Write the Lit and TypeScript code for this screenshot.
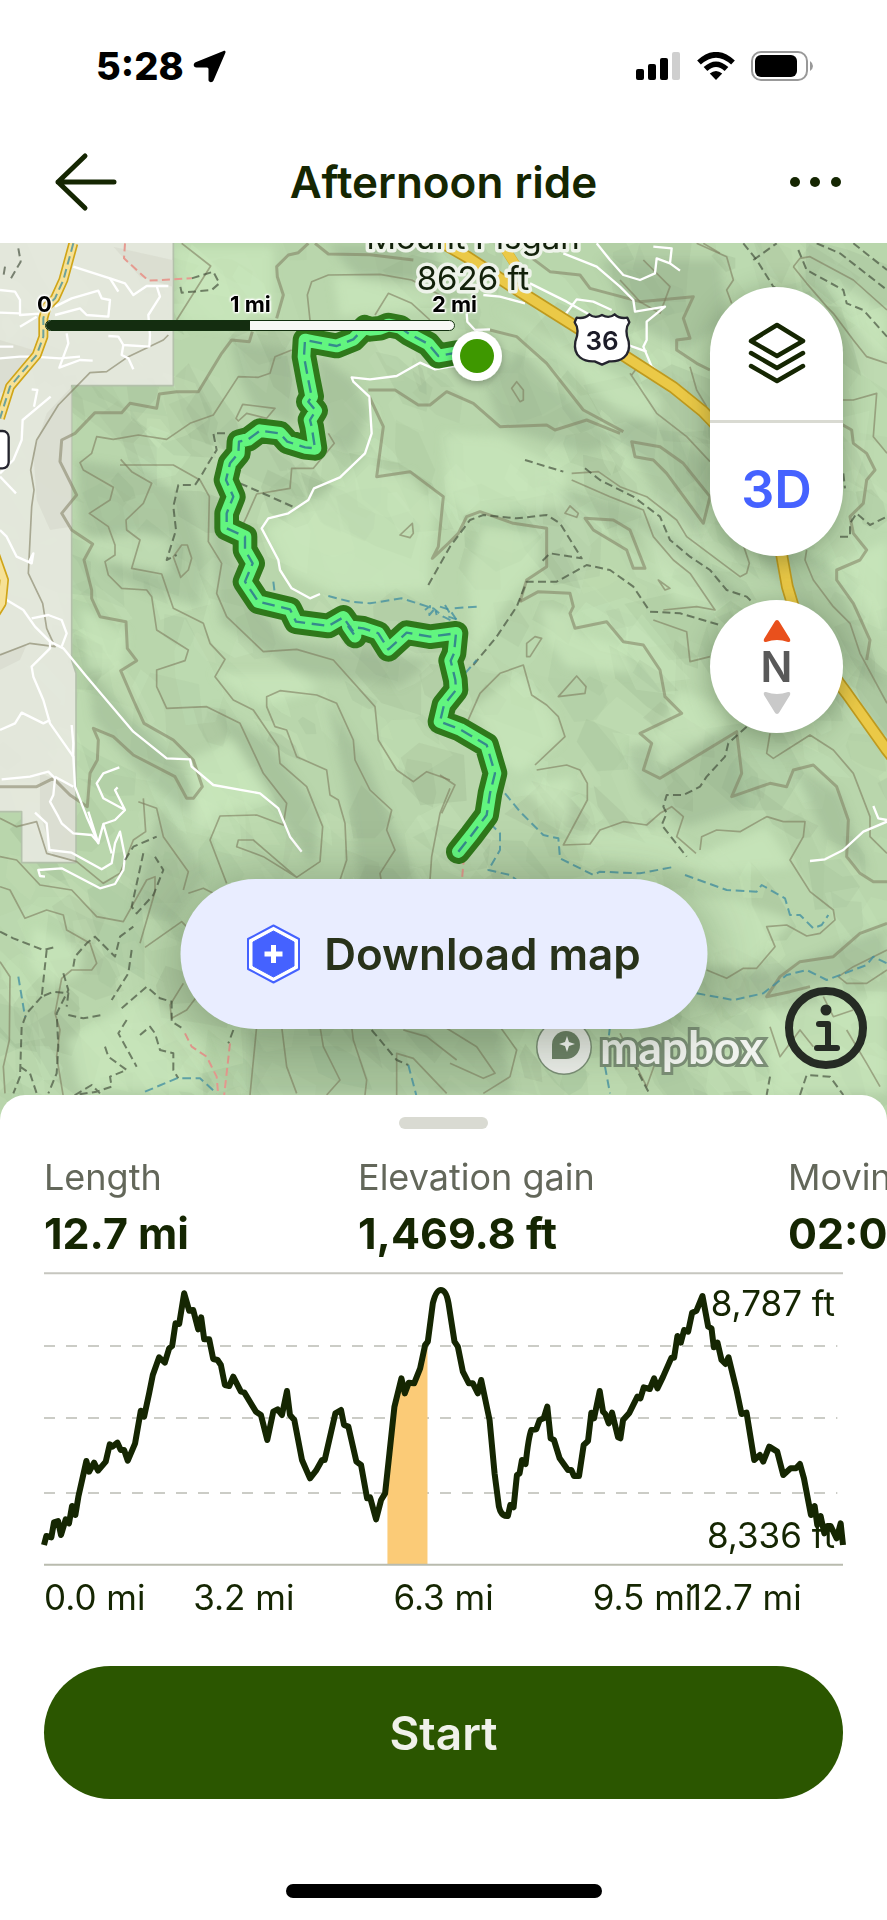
import { LitElement, html, css, svg } from "lit";
import { customElement } from "lit/decorators.js";

/* Map geometry is drawn on a 3x grid: one map pixel is three units. */
const THICK = [
  "M925,10L895,38 865,45 830,80 832,110 850,165 830,235",
  "M757,275L748,305 695,300 665,340 595,455 530,455 478,462 470,505 390,490 365,518 285,518 225,580 185,600 180,665 230,765 185,820 215,870 278,912 252,960 275,1050 275,1075 300,1130 378,1145 382,1225 410,1262 362,1292 400,1380 432,1450 520,1500 580,1560 607,1640 580,1675 560,1675 525,1610 400,1545 340,1490 280,1465 295,1500 292,1560 270,1600 262,1700 210,1665 160,1615 110,1640 0,1640",
  "M945,10L985,42 1110,44 1240,60",
  "M1105,450L1185,450 1255,495 1290,495 1340,455 1420,490 1500,560 1640,555 1665,570 1760,540 1860,580",
  "M1108,470L1150,560 1130,710 1230,695 1330,770 1315,920 1297,955 1345,910 1375,880 1400,830 1440,815 1540,850 1640,865 1640,980 1580,1020 1560,1085",
  "M1590,50L1650,95 1740,105 1770,145 1920,185 2080,170 2050,235 2070,295 2030,300 2030,330 2090,370 2130,390",
  "M1470,270L1550,290 1640,370 1750,510 1870,575",
  "M1895,605L1980,620 2050,670 2130,770 2110,850 2000,700 1960,660 1905,650z",
  "M1755,835L1840,840 1890,870 1935,985 1900,985 1880,930 1780,870z",
  "M1560,1085L1615,1055 1710,1060 1720,1100 1710,1120 1725,1165 1820,1145 1870,1205 1930,1215 1980,1290 1995,1370 2045,1420 1920,1480 1955,1510 1930,1590 1980,1615 2210,1475 2225,1600 2195,1670 2310,1630 2360,1640 2380,1590 2440,1575 2510,1640 2545,1740 2540,1850 2580,1900 2620,1925 2661,1925",
  "M2520,550L2555,570 2560,610 2600,640 2625,690 2600,720 2590,790 2550,830 2560,880 2600,930 2580,960 2510,990 2510,1020 2560,1090 2610,1200 2600,1260",
  "M2661,2050L2580,2080 2500,2150 2400,2165 2340,2210 2300,2270 2370,2255 2430,2240",
];
const THIN = [
  "M545,10L632,78 530,240",
  "M505,285L490,300 385,350 320,395 270,398 175,495 110,600 92,690 102,750 95,800 85,1000 128,1090 140,1165 165,1220 90,1210 0,1245",
  "M930,240L922,165 935,125 985,105 1140,103 1235,120 1330,170",
  "M1125,225L1165,160 1235,190 1290,240",
  "M875,330L825,350 810,400 775,412 715,410 640,525 570,550 500,598 415,585 340,598 290,590 275,640 240,668 250,690 340,742 330,780 268,820 325,860 345,915 345,945 315,965 325,1005 365,1045 440,1050 455,1070 470,1170 565,1230 555,1262 470,1290 470,1340 500,1405 620,1400 720,1450 790,1600 860,1690 850,1755 770,1725 660,1728 630,1800 680,1930",
  "M360,675L520,675 600,720 628,770 625,905 665,970 650,1060 680,1130 790,1235 890,1228 1000,1260 1125,1400 1135,1500 1190,1590 1240,1625 1280,1595 1350,1620",
  "M362,658L395,695 455,730 430,790 378,840 380,870 420,900 395,985 485,1002 520,1105 610,1150 630,1210 675,1258 645,1310 700,1380 760,1410 835,1520 840,1570 920,1640 968,1760 960,1865 890,1912 790,1850 710,1820 715,1800 760,1800 890,1912",
  "M800,1400L800,1370 840,1352 950,1365 1010,1390 1060,1500 1065,1560 1110,1650 1175,1710 1160,1770 1185,1830 1140,1900 1145,1930",
  "M800,1400L825,1460 860,1470 890,1550 980,1590 990,1665 1015,1680 1035,1750 1040,1860 1020,1920",
  "M728,493L825,505 800,535 740,520 715,543 708,535z",
  "M520,950L545,915 562,915 575,955 565,990 542,1012z",
  "M985,580L1003,610 940,685 875,685 870,745 770,762 740,830 728,855",
  "M1200,885L1237,850 1240,880 1230,893z",
  "M0,1735L50,1760 110,1745 140,1840 230,1865 310,1930 360,1900 400,1800 437,1775 430,1675",
  "M415,1685L470,1705 490,1790 565,1895 550,1950",
  "M0,1850L50,1860 120,1935 215,1950 290,2030 370,2045 440,1920 465,1910 465,1955 420,2110",
  "M0,1940L30,1950 75,2035 140,2010 190,2025 200,2070 270,2110 290,2170 275,2190 215,2190 185,2215 165,2320 180,2370 170,2450 190,2570",
  "M0,2165L30,2210 28,2400 10,2480 15,2560",
  "M435,2122L545,2045 560,2060",
  "M550,2230L510,2295 515,2335 560,2310 590,2270",
  "M565,1960L610,1945 640,1960",
  "M770,2360L750,2565M845,2360L860,2480 890,2560M960,2360L970,2420 1020,2520 980,2565M1055,2360L1060,2400 1100,2520 1095,2565M1190,2565L1190,2440 1240,2455 1340,2560M1210,2370L1280,2390 1370,2460",
  "M1340,2365L1430,2420 1485,2500 1450,2515 1350,2470M1500,2360L1550,2430 1530,2510 1450,2560",
  "M1350,1645L1320,1720 1295,1850 1290,1920",
  "M1320,1605L1365,1635 1325,1720",
  "M1860,120L1920,185 1980,220 2010,140 1930,60",
  "M2090,10L2180,50 2200,120 2180,150 2195,190",
  "M2110,10L2160,40M2380,80L2400,55 2430,50 2560,120 2661,210",
  "M2380,80L2420,130 2480,200 2500,220 2560,300 2600,350 2661,370",
  "M1535,445L1550,425 1570,450 1570,480 1560,485z",
  "M1890,400L1970,520 2060,590 2130,665",
  "M1910,385L1895,405M2070,380L2090,450 2120,500",
  "M1715,700L1795,695 1860,740 1940,770 2030,840 2060,890 2220,1010 2240,1000 2248,970 2225,900",
  "M1715,720L1830,770 1930,810 1960,890 2020,960 2070,1000 2145,1110 2090,1100 1990,1110",
  "M1695,820L1710,798 1735,820 1730,832z",
  "M1975,1020L2010,1045 1995,1050z",
  "M1580,1210L1605,1190 1625,1195 1590,1250 1580,1250z",
  "M1960,1140L2060,1175 2070,1265 2130,1250",
  "M1400,1450L1440,1360 1500,1300 1570,1275 1595,1365 1640,1395 1675,1430 1695,1490 1605,1575",
  "M1675,1370L1730,1308 1758,1340 1755,1360z",
  "M1610,1590L1700,1575 1740,1590 1762,1630 1762,1680 1690,1815 1770,1812 1800,1770 1870,1745 1940,1755 1980,1720 2015,1700 2050,1730 2030,1790 2088,1840",
  "M2100,1830L2105,1790 2150,1770 2220,1775 2300,1730 2350,1745 2415,1745 2410,1790 2370,1860 2430,1955 2500,2010 2505,2040 2460,2080 2420,2088 2360,2055 2300,2060 2325,2120 2270,2185 2230,2185 2180,2215 2120,2190",
  "M2310,1480L2300,1540 2320,1555 2430,1485 2500,1530 2560,1600 2610,1730 2610,1790 2661,1840",
  "M2420,930L2415,960 2440,1020 2500,1100 2550,1150 2580,1240 2661,1390",
  "M2520,480L2560,480 2630,460 2620,590 2661,640",
  "M2661,2130L2560,2180 2515,2210 2540,2230 2600,2230 2661,2190",
  "M2470,2270L2500,2330 2560,2310M2310,2360L2340,2450 2400,2370 2440,2420M2540,2370L2600,2470 2640,2540",
  "M1860,2380L1940,2540 1990,2400",
];
const DASH = [
  "M575,115L640,95 658,130 635,150 545,158 540,135",
  "M55,25L62,65 30,120M15,80L10,110",
  "M675,580L640,580 650,630 625,670 605,705 585,735 535,735 520,800 528,870 500,960 530,945",
  "M720,730L800,765 885,803",
  "M1285,1035L1350,920 1410,840 1450,825 1550,835 1640,825 1680,850 1745,955 1650,940 1620,970",
  "M1420,1275L1490,1190 1550,1100 1580,1025 1670,1025 1760,975 1830,990 1900,1040 1950,1115 2040,1120 2160,1155",
  "M1575,660L1690,695M1755,685L1800,720 1900,770 1980,830 2010,900 2070,950 2130,990 2180,1050 2240,1070 2260,1090",
  "M2230,10L2270,60 2320,140 2390,180",
  "M2260,60L2330,10M2395,30L2420,90 2530,150 2540,190 2590,210 2661,290",
  "M2450,10L2520,40 2661,150M2560,10L2661,90",
  "M2240,1460L2185,1510 2175,1550 2120,1610 2100,1640 2050,1665 2000,1665 1990,1700 2000,1720 1985,1755 2060,1850",
  "M2520,890L2550,890 2550,850 2570,820 2610,855 2661,830",
  "M2530,700L2535,745",
  "M0,2075L40,2095 130,2130 170,2120M140,2130L125,2270 160,2255 205,2260 200,2300",
  "M125,2270L80,2320 65,2360 60,2510 40,2560M60,2480L90,2500 110,2560",
  "M190,2200L205,2250 170,2320 175,2420 170,2500 145,2560",
  "M220,2180L225,2150 260,2110 285,2090 345,2150 360,2090 400,2060",
  "M205,2325L250,2335 305,2325M430,1840L395,2000 410,2020 460,1965 490,1890 465,1850",
  "M375,1860L400,1820 470,1790M395,2130L385,2200 335,2280",
  "M365,2305L405,2270 440,2240 480,2275 515,2285 515,2345 555,2370",
  "M380,2340L355,2380 410,2480M420,2385L450,2360 465,2380 480,2430 520,2440 520,2490 535,2515",
  "M315,2420L325,2450 380,2490 330,2510 335,2540 290,2555 225,2565 275,2535 300,2560",
  "M700,2370L685,2410M1115,2370L1190,2460 1225,2475",
  "M1870,2400L1900,2470 1945,2555M2400,2565L2420,2505 2490,2510 2530,2565",
  "M2310,2510L2300,2565",
];
const BLUE = [
  "M985,1068L1050,1085 1110,1090 1205,1075 1300,1105 1330,1130 1370,1150",
  "M820,1025L825,1065 880,1110M1320,1100L1350,1110 1370,1140",
  "M1275,1110L1290,1098 1288,1125 1305,1105 1310,1125M1335,1095L1350,1120M1430,1100L1360,1105M1345,1130L1375,1140 1365,1155",
  "M1515,1660L1560,1715 1630,1785 1675,1795 1680,1855 1780,1905 1800,1895 1920,1900 2025,1880",
  "M1395,1300L1430,1260M1470,1750L1500,1780 1500,1830 1465,1890 1530,1905 1550,1920",
  "M2055,1905L2180,1950 2270,1955 2285,1935 2355,1975 2370,2025 2400,2025 2440,2065 2465,2055 2485,2025",
  "M2090,2260L2200,2280 2290,2260 2360,2205 2420,2190 2480,2220 2600,2175 2620,2150 2661,2170",
  "M55,2210L75,2330M435,2555L530,2515 600,2515 650,2560",
  "M1225,2475L1250,2570M1830,2360L1815,2480 1830,2560",
];
const PINK = [
  "M375,10L372,55 445,122 575,115",
  "M555,2380L575,2420 620,2450 650,2510 655,2570M690,2410L672,2570M1392,1850L1385,1930",
];
const WHITE = [
  "M220,80L330,115 375,130 400,165 440,138 505,138M470,138L480,170 445,225 450,285 448,320 370,315 355,290 325,288",
  "M330,115L355,155M165,200L215,175 295,152 305,175 330,180 325,230 260,225 240,205 165,225",
  "M0,150L45,155 60,180 60,225 130,220M0,218L60,220M60,260L110,230M0,320L40,320M0,355L60,350 100,350 180,355 240,350",
  "M200,280L205,310 178,383 240,360 278,362M370,315L365,345 385,355 400,388",
  "M95,448L112,450 102,500M152,470L68,540 65,600 40,660 0,700M0,710L48,760",
  "M0,870L20,890 50,950 95,970 100,940 85,970M0,1050L20,1080 70,1110 105,1160 150,1205 190,1225 260,1310 400,1475 500,1555 570,1558 575,1580 640,1635 780,1660 835,1705 870,1790 905,1835",
  "M95,1135L145,1125 185,1140 200,1180 185,1220M150,1200L150,1225 95,1280 100,1310 130,1380 150,1450 220,1550 225,1640 260,1730 295,1810 265,1715",
  "M0,1470L45,1450 65,1418 130,1450 150,1440M215,1455L220,1510 218,1550M5,1618L90,1610 145,1595 165,1615 160,1665 150,1685 175,1730 185,1750 220,1780 275,1785 295,1808 310,1752 335,1840",
  "M165,1610L220,1640M105,1718L140,1750 148,1830 215,1838 305,1888 335,1870 345,1810 360,1775 375,1850 370,1890 345,1932 300,1945 185,1885 115,1890 120,1908 135,1910",
  "M358,1582L310,1600 290,1630 310,1675 375,1710 345,1740 310,1752M375,1710L345,1650 353,1642",
  "M1350,380L1305,388 1260,368 1190,408 1110,418 1055,412 1060,425 1108,470 1115,580 1095,640 1020,712 942,745 925,780 865,820 805,835 785,865 835,960 840,990 875,1045 930,1075 960,1062",
  "M1400,220L1402,245 1425,270 1470,268M1350,380L1400,375",
  "M1690,40L1790,80 1860,140 1900,180 1905,215 1995,200 1940,245 1940,300 1930,320 1955,380 2045,452",
  "M1790,10L1830,60 1870,105 1920,120 1965,100 1970,55 2010,70 2040,92M2010,70L2015,25 1960,20",
  "M1590,130L1700,185 1780,230 1870,310 1940,335M1695,225L1730,178 1780,185 1835,210M1450,165L1500,170 1575,190",
  "M2430,1863L2475,1858 2530,1830 2590,1775 2661,1745M2620,1698L2635,1735 2661,1740",
];
const GOLD = "M1330,10L1400,50 1560,155 1740,268 1880,352 2020,442 2110,515 2230,640 2320,800 2345,945 2362,1040 2395,1150 2480,1280 2540,1360 2661,1530 2700,1580";
const PALE = "M220,10L190,120 165,175 140,200 130,235 130,290 110,345 30,440 0,535";
const ROUTE = "M1432,347L1370,338 1315,348 1285,312 1225,280 1200,262 1165,255 1140,265 1110,268 1095,262 1060,298 1010,318 940,305 915,300 912,350 925,420 935,470 925,485 947,512 930,540 935,560 945,625 915,622 862,605 840,580 780,572 745,598 717,605 715,640 690,670 678,720 700,770 680,820 680,865 735,890 735,930 758,970 735,1025 775,1085 870,1108 888,1145 985,1158 1030,1132 1060,1175 1065,1188 1045,1160 1090,1165 1135,1180 1165,1228 1220,1178 1290,1190 1368,1180 1362,1240 1352,1262 1366,1320 1368,1350 1332,1395 1320,1445 1380,1468 1460,1515 1485,1600 1470,1660 1460,1725 1415,1785 1375,1835";

const SHADE = [
  "M690,300L880,330 890,560 760,500 720,420z",
  "M950,340L1060,420 1110,520 1050,640 990,600 960,500z",
  "M230,660L430,690 560,780 620,960 600,1100 450,1060 330,1000 240,850z",
  "M620,730L680,900 740,1060 860,1200 1300,1260 1200,1340 900,1300 660,1150z",
  "M1560,330L1740,520 1860,600 1760,640 1500,560 1460,440z",
  "M1840,560L1960,520 2140,680 2100,900 1980,780z",
  "M1600,720L1900,800 2150,1000 2240,1080 2120,1100 1900,900z",
  "M2240,900L2480,960 2661,1350 2580,1300 2420,1130z",
  "M260,1280L420,1460 600,1640 560,1720 420,1600 280,1440z",
  "M640,1400L800,1500 960,1720 940,1880 820,1700 700,1520z",
  "M980,1380L1100,1560 1180,1760 1260,1930 1080,1930 1040,1650z",
  "M480,1700L620,1900 520,2050 400,2000z",
  "M1880,1520L2200,1470 2240,1700 2060,1760 1920,1660z",
  "M2380,1580L2520,1660 2610,1900 2480,1800z",
  "M2060,2160L2300,2200 2661,2060 2661,2180 2350,2260 2120,2320z",
  "M750,2360L1500,2360 1540,2565 750,2565z",
  "M980,10L1300,10 1350,200 1080,120z",
  "M1800,60L2160,60 2180,250 2050,330 1900,250z",
];
const GLOW = [
  "M1120,500L1140,700 1230,700 1310,800 1290,960 1290,1050 1000,1060 870,1000 800,870 930,790 1030,710 1120,620z",
  "M1330,580L1500,590 1700,690 1690,800 1500,820 1400,830 1340,760z",
  "M1450,860L1620,880 1620,970 1540,1060 1420,1240 1400,1000z",
  "M1620,1100L1720,1120 1730,1180 1860,1220 1900,1300 1700,1280 1640,1200z",
  "M1420,1400L1560,1300 1660,1420 1680,1500 1560,1600 1500,1560z",
  "M1560,1640L1720,1610 1700,1780 1990,1760 2100,1840 2300,1760 2380,1880 2160,1900 1800,1860z",
  "M1900,1960L2200,1980 2380,2040 2260,2170 2140,2180z",
  "M100,2060L250,2130 240,2200 160,2240 90,2180z",
  "M200,2400L440,2260 620,2400 600,2550 240,2550z",
  "M560,1560L700,1500 820,1680 640,1720 600,1780z",
  "M640,1300L900,1300 960,1350 780,1400z",
  "M240,900L420,880 520,900 500,1000 300,960z",
  "M240,1100L380,1180 360,1300 260,1290z",
  "M520,20L820,20 820,240 700,270 540,250z",
  "M1000,110L1300,130 1330,200 1020,230z",
  "M1480,200L1620,300 1840,500 1980,560 1980,470 1800,380z",
  "M1900,850L2100,1000 2160,1120 2020,1080z",
  "M2540,960L2661,900 2661,1200 2600,1100z",
  "M2040,1350L2180,1400 2180,1460 1980,1580 1960,1500z",
  "M2280,2320L2661,2250 2661,2560 2320,2560z",
  "M2460,100L2661,220 2661,360 2560,260z",
];

/* Angular hill-shading facets, generated from a fixed seed. */
function facets(count: number, seed: number) {
  let s = seed;
  const rnd = () => ((s = (s * 16807) % 2147483647) / 2147483647);
  const out: { d: string; light: boolean; o: number }[] = [];
  for (let i = 0; i < count; i++) {
    const x = rnd() * 2700, y = rnd() * 2620, r = 50 + rnd() * 130, n = 5 + Math.floor(rnd() * 3);
    const lean = 0.5 + rnd() * 0.8, flat = 0.3 + rnd() * 0.5;
    let d = "";
    for (let k = 0; k < n; k++) {
      const a = (k / n) * 6.28, q = r * (0.5 + rnd() * 0.7);
      const u = Math.cos(a) * q, v = Math.sin(a) * q * flat;
      d += `${k ? "L" : "M"}${Math.round(x + u * Math.cos(lean) - v * Math.sin(lean))},${Math.round(y + u * Math.sin(lean) + v * Math.cos(lean))}`;
    }
    out.push({ d: d + "z", light: rnd() > 0.45, o: 0.08 + rnd() * 0.2 });
  }
  return out;
}
const FACETS = facets(560, 4242);
const lines = (list: string[], cls: string) => list.map((d) => svg`<path class=${cls} d=${d} />`);

@customElement("trail-map")
export class TrailMap extends LitElement {
  static styles = css`
    :host { display: block; position: absolute; inset: 0; }
    svg { display: block; width: 100%; height: 100%; }
    path { fill: none; stroke-linejoin: round; }
    .light { fill: #cdebc0; }
    .dark { fill: #98b28d; }
    .shade { fill: #869f7c; opacity: 0.32; }
    .glow { fill: #cdebc0; opacity: 0.6; }
    .town { fill: #e7e9df; opacity: 0.93; stroke: #b4c0ac; stroke-width: 5; }
    .suburb { fill: #d6d7cb; opacity: 0.55; }
    .thick { stroke: #7c785c; stroke-opacity: 0.52; stroke-width: 9; }
    .thin { stroke: #7c785c; stroke-opacity: 0.58; stroke-width: 5; }
    .dash { stroke: #3f4a38; stroke-opacity: 0.66; stroke-width: 6; stroke-dasharray: 24 13; }
    .blue { stroke: #3e8ca0; stroke-opacity: 0.75; stroke-width: 6; stroke-dasharray: 26 14; }
    .pink { stroke: #e69a90; stroke-width: 6; stroke-dasharray: 24 13; }
    .white { stroke: #fff; stroke-width: 7; }
    .gold-edge { stroke: #bf9a1e; stroke-width: 38; }
    .gold { stroke: #ebc947; stroke-width: 28; }
    .pale-edge { stroke: #d0a518; stroke-width: 30; }
    .pale { stroke: #f6e196; stroke-width: 20; }
    .route-edge { stroke: #2f781b; stroke-width: 74; stroke-linecap: round; }
    .route { stroke: #62f57f; stroke-width: 38; stroke-linecap: round; }
    .route-dash { stroke: #358b8c; stroke-width: 7; stroke-dasharray: 38 20; }
    .plate { fill: #fff; stroke: #24242e; stroke-width: 7; }
    text { font-family: Inter, "Liberation Sans", sans-serif; fill: #12210a; }
    .peak { font-size: 33px; text-anchor: middle; stroke: #eef3ea; stroke-width: 7; stroke-linejoin: round; paint-order: stroke; }
    .road { font-size: 26px; font-weight: 600; text-anchor: middle; fill: #1c1c28; }
  `;
  render() {
    return html`<svg viewBox="0 243 887 877" preserveAspectRatio="xMinYMin slice" role="img" aria-label="Trail map">
      <defs>
        <filter id="soft" x="-20%" y="-20%" width="140%" height="140%"><feGaussianBlur stdDeviation="14" /></filter>
        <filter id="drop" x="-50%" y="-50%" width="200%" height="200%"><feDropShadow dx="0" dy="3" stdDeviation="4" flood-opacity=".3" /></filter>
      </defs>
      <rect x="0" y="243" width="887" height="900" fill="#b9d6ac" />
      <g transform="translate(0 240) scale(.333333)">
        ${FACETS.map((f) => svg`<path class=${f.light ? "light" : "dark"} d=${f.d} opacity=${f.o} />`)}
        <g filter="url(#soft)">${lines(SHADE, "shade")}${lines(GLOW, "glow")}</g>
        <path class="town" d="M-10,-10H520V437H215V1260L228,1300V1868H65V1715H-10z" />
        <path class="suburb" d="M215,440L140,520 100,640 110,780 150,870 215,860zM0,300L100,330 60,420 0,460zM120,1600L225,1640V1860L160,1850 120,1720zM340,20L518,60 518,140 420,110zM0,1240L80,1215 60,1260 0,1290z" />
        ${lines(THIN, "thin")}${lines(THICK, "thick")}
        ${lines(WHITE, "white")}
        <path class="pale-edge" d=${PALE} /><path class="pale" d=${PALE} /><path class="blue" d=${PALE} />
        <path class="pale-edge" d="M-20,930L12,1020 5,1090 -20,1130" /><path class="pale" d="M-20,930L12,1020 5,1090 -20,1130" />
        <path class="pale-edge" d="M1505,10L1550,80" /><path class="gold" d="M1505,10L1550,80" />
        <path class="gold-edge" d=${GOLD} /><path class="gold" d=${GOLD} />
        ${lines(DASH, "dash")}${lines(BLUE, "blue")}${lines(PINK, "pink")}
        <path class="route-edge" d=${ROUTE} /><path class="route" d=${ROUTE} /><path class="route-dash" d=${ROUTE} />
        <rect class="plate" x="-60" y="573" width="86" height="112" rx="18" />
        <path class="plate" d="M1730,233Q1755,237 1768,223Q1785,237 1806,225Q1827,237 1844,223Q1858,237 1882,233L1888,247Q1872,268 1886,305C1894,350 1860,366 1828,364L1806,374 1784,364C1752,366 1718,350 1726,305Q1740,268 1724,247z" />
      </g>
      <text class="peak" x="473" y="249">Mount Pisgah</text>
      <text class="peak" x="473" y="290">8626 ft</text>
      <text class="road" x="602" y="350">36</text>
      <circle cx="477" cy="356" r="25" fill="#fff" filter="url(#drop)" />
      <circle cx="477" cy="356" r="17" fill="#3e9800" />
    </svg>`;
  }
}

@customElement("elevation-chart")
export class ElevationChart extends LitElement {
  static styles = css`
    :host { display: block; }
    .plot { position: relative; height: 292px; }
    svg { display: block; width: 100%; height: 100%; overflow: visible; }
    path { fill: none; vector-effect: non-scaling-stroke; }
    .frame { stroke: #c6c6bf; stroke-width: 2px; }
    .base { stroke: #b9bbae; stroke-width: 2px; }
    .grid { stroke: #cbccc6; stroke-width: 2px; stroke-dasharray: 11px 11px; }
    .line { stroke: #152602; stroke-width: 6px; stroke-linejoin: round; }
    .steep { fill: #fbcb77; }
    .y { position: absolute; right: 8px; line-height: 44px; }
    .max { top: 8px; }
    .min { bottom: 8px; }
    .x { display: grid; grid-template-columns: 149fr 200fr 199fr 95fr 155fr; line-height: 44px; margin-top: 10px; }
    .x span { min-width: 0; white-space: nowrap; }
  `;
  render() {
    return html`<div class="plot">
        <svg viewBox="135 39 2394 876" preserveAspectRatio="none" role="img" aria-label="Elevation profile">
          <path class="frame" d="M135,40H2529" />
          <path class="grid" d="M135,258H2512M135,474H2512M135,699H2512" />
          <path class="steep" d="M1164,915V680L1170,580 1185,440 1206,370 1216,400 1228,368 1244,370 1262,325 1277,255 1284,248V915z" />
          <path class="base" d="M135,914H2529" />
          <path class="line" d="M135,855L142,828 157,832 165,787 177,783 186,825 200,778 210,790 219,738 229,765 238,710 262,603 270,635 285,608 297,632 320,605 332,553 340,560 355,548 365,570 375,570 386,602 408,550 425,452 435,470 450,400 461,345 480,292 497,308 510,265 519,258 529,190 540,192 555,100 570,152 582,150 597,208 606,172 615,238 630,238 642,297 655,300 665,315 677,375 690,378 702,350 725,395 735,397 770,455 785,465 804,540 822,455 835,448 848,465 863,393 872,465 885,480 908,600 932,655 950,632 968,600 976,600 1008,460 1025,450 1034,495 1047,500 1071,605 1085,615 1103,715 1112,712 1130,778 1145,720 1157,700 1170,580 1185,440 1206,355 1216,400 1228,368 1244,370 1262,325 1277,255 1285,245 1300,130Q1310,90 1324,90Q1340,90 1347,130L1365,245 1375,260 1390,335 1408,370 1420,370 1435,400 1445,360 1470,480 1485,640 1498,740Q1505,770 1525,768L1532,735 1542,742 1552,645 1560,640 1567,600 1578,612Q1587,530 1595,510L1610,508 1620,480 1632,475 1643,440 1653,535 1663,540 1680,595 1705,630 1715,630 1723,648 1738,648 1752,555 1765,543 1775,458 1783,475 1800,393 1810,455 1817,462 1827,490 1837,458 1855,532 1862,535 1870,480 1888,460 1913,410 1922,415 1932,382 1950,387 1963,355 1973,385 1990,350 2015,293 2023,293 2033,228 2043,248 2053,210 2065,215 2077,158 2090,152 2108,108 2125,200 2135,205 2142,262 2153,248 2165,300 2177,312 2186,292 2210,390 2225,462 2240,458 2263,600 2280,585 2290,605 2308,560 2332,575 2350,645 2372,625 2388,625 2400,612 2412,655 2433,765 2444,738 2452,795 2462,768 2473,820 2482,798 2492,798 2510,835 2522,790 2529,855" />
        </svg>
        <span class="y max">8,787 ft</span>
        <span class="y min">8,336 ft</span>
      </div>
      <div class="x"><span>0.0 mi</span><span>3.2 mi</span><span>6.3 mi</span><span>9.5 mi</span><span>12.7 mi</span></div>`;
  }
}

@customElement("app-root")
export class AppRoot extends LitElement {
  static styles = css`
    :host { display: flex; flex-direction: column; min-height: 100vh; overflow: hidden; background: #fff; color: #152602; font-family: Inter, "Liberation Sans", sans-serif; }
    * { box-sizing: border-box; }
    svg { display: block; }
    button { font: inherit; color: inherit; border: 0; padding: 0; margin: 0; background: none; display: flex; align-items: center; justify-content: center; }
    .status { display: flex; justify-content: space-between; align-items: center; height: 132px; padding: 0 72px 0 96px; color: #000; }
    .clock { display: flex; align-items: center; gap: 9px; font-size: 38px; font-weight: 800; line-height: 44px; }
    .signals { display: flex; align-items: center; gap: 16px; }
    .bar { display: grid; grid-template-columns: 80px 1fr 80px; align-items: center; height: 111px; padding: 0 44px 12px; }
    .bar button { height: 80px; justify-content: flex-end; }
    h1 { margin: 0; text-align: center; font-size: 44px; font-weight: 600; line-height: 56px; }
    .map { position: relative; flex: 1 1 auto; min-height: 600px; }
    .scale { position: absolute; top: 49px; left: 37px; width: 440px; font-size: 22px; font-weight: 700; line-height: 24px; color: #000; }
    .marks { display: flex; justify-content: space-between; text-shadow: 0 0 3px #fff, 0 0 3px #fff, 0 0 3px #fff, 0 0 3px #fff, 1px 1px 1px #fff, -1px -1px 1px #fff; }
    .zero { min-width: 32px; }
    .track { display: flex; height: 11px; width: 410px; margin: 4px 8px 0; border: 1px solid #12300f; border-radius: 6px; background: #f7f8f5; overflow: hidden; }
    .half { width: 50%; background: #142d10; }
    .tools { position: absolute; top: 44px; right: 44px; width: 133px; display: flex; flex-direction: column; gap: 44px; }
    .pill { display: flex; flex-direction: column; border-radius: 67px; background: #fff; box-shadow: 0 6px 28px rgba(30, 50, 20, 0.35); overflow: hidden; }
    .pill button { height: 133px; }
    .pill button + button { height: 136px; border-top: 3px solid #d9dad2; font-size: 52px; font-weight: 600; color: #4562ff; }
    .compass { height: 133px; flex-direction: column; gap: 8px; border-radius: 50%; background: #fff; box-shadow: 0 6px 28px rgba(30, 50, 20, 0.35); font-size: 42px; font-weight: 600; line-height: 32px; color: #595959; }
    .download { position: absolute; bottom: 91px; left: 50%; transform: translateX(-50%); width: 527px; height: 150px; border-radius: 75px; background: #e9edff; color: #28321a; gap: 24px; font-size: 44px; font-weight: 600; box-shadow: 0 8px 60px rgba(40, 60, 30, 0.4); }
    .brand { position: absolute; left: 535px; bottom: 44px; display: flex; align-items: center; gap: 7px; color: #f1f3ef; font: 700 46px/54px Lato, Inter, sans-serif; -webkit-text-stroke: 6px #7b8e76; paint-order: stroke fill; }
    .info { position: absolute; right: 20px; bottom: 51px; }
    .sheet { position: relative; margin-top: -25px; padding: 22px 0 22px; border-radius: 25px 25px 0 0; background: #fff; display: flex; flex-direction: column; font-size: 35px; }
    .grip { align-self: center; width: 89px; height: 12px; border-radius: 6px; background: #d9dad2; }
    .stats { display: grid; grid-template-columns: 314px 430px max-content; margin: 24px 0 0; padding: 0 0 12px 44px; overflow: hidden; }
    dt { color: #63675a; font-size: 36px; line-height: 48px; }
    dd { margin: 4px 0 0; font-size: 43px; font-weight: 700; line-height: 56px; }
    elevation-chart { margin: 0 44px; }
    .start { margin: 47px 44px 0; height: 133px; border-radius: 67px; background: #2b5600; color: #f0f1ea; font-size: 46px; font-weight: 600; }
    .home { align-self: center; width: 316px; height: 14px; margin-top: 85px; border-radius: 7px; background: #000; }
  `;
  render() {
    return html`
      <div class="status">
        <div class="clock">5:28
          <svg width="33" height="33" viewBox="0 0 33 33"><path d="M30.5 1C32 .4 33 1.500 32.300 3L20.500 30.500C19.500 33 15.500 32.500 15.500 30V19Q15.500 17.500 14 17.500H3.500C.2 17.500 -.2 13.500 2.600 12.300z" /></svg>
        </div>
        <div class="signals">
          <svg width="45" height="28" viewBox="0 0 45 28"><rect y="17" width="8" height="11" rx="2" /><rect x="12" y="12" width="8" height="16" rx="2" /><rect x="24" y="6" width="8" height="22" rx="2" /><rect x="36" width="8" height="28" rx="2" fill="#cfcfcf" /></svg>
          <svg width="38" height="28" viewBox="0 0 38 28"><g fill="none" stroke="#000" stroke-width="5.500"><path d="M2 10.500Q19-5 36 10.500" /><path d="M8.500 17Q19 7.500 29.500 17" /></g><path d="M19 28L12.800 21.500Q19 16.500 25.200 21.500z" /></svg>
          <svg width="64" height="30" viewBox="0 0 64 30"><rect x="1" y="1" width="55" height="28" rx="9" fill="none" stroke="#999" stroke-width="2" /><rect x="4" y="4" width="42" height="22" rx="6" /><path d="M59 10Q62 12 62 15T59 20z" fill="#999" /></svg>
        </div>
      </div>
      <header class="bar">
        <button aria-label="Back"><svg width="70" height="60" viewBox="0 0 70 60" fill="none" stroke="#152602" stroke-width="5" stroke-linecap="round" stroke-linejoin="round"><path d="M60 30H4M31 4L4 30L31 56" /></svg></button>
        <h1>Afternoon ride</h1>
        <button aria-label="More"><svg width="56" height="12" viewBox="0 0 56 12" fill="#152602"><circle cx="8" cy="6" r="5" /><circle cx="28" cy="6" r="5" /><circle cx="49" cy="6" r="5" /></svg></button>
      </header>
      <section class="map">
        <trail-map></trail-map>
        <div class="scale">
          <div class="marks"><span class="zero">0</span><span>1 mi</span><span>2 mi</span></div>
          <div class="track"><div class="half"></div></div>
        </div>
        <div class="tools">
          <div class="pill">
            <button aria-label="Map layers"><svg width="60" height="64" viewBox="0 0 60 64" fill="none" stroke="#152602" stroke-width="4.500" stroke-linecap="round" stroke-linejoin="round"><path d="M30 3L56 19L30 34L4 19zM4 31L30 46L56 31M4 44L30 59L56 44" /></svg></button>
            <button>3D</button>
          </div>
          <button class="compass" aria-label="North">
            <svg width="28" height="24" viewBox="0 0 28 24"><path d="M14 1Q15.500 1 16.500 3L27 20Q28 23.500 25 23Q14 19 3 23Q0 23.500 1 20L11.500 3Q12.500 1 14 1z" fill="#e9501c" /></svg>
            <span>N</span>
            <svg width="28" height="24" viewBox="0 0 28 24"><path d="M14 23Q15.500 23 16.500 21L27 4Q28 .5 25 1Q14 5 3 1Q0 .5 1 4L11.500 21Q12.500 23 14 23z" fill="#c9c9c9" /></svg>
          </button>
        </div>
        <div class="brand">
          <svg width="58" height="58" viewBox="0 0 58 58"><circle cx="29" cy="29" r="26.500" fill="#eceeea" stroke="#7b8e76" stroke-width="3" /><path d="M17 41V27A14 14 0 1 1 31 41z" fill="#6e8268" /><path d="M32 18L34 24L40 26L34 28L32 34L30 28L24 26L30 24z" fill="#fff" /></svg>
          <span>mapbox</span>
        </div>
        <button class="info" aria-label="Map information"><svg width="82" height="82" viewBox="0 0 82 82"><circle cx="41" cy="41" r="37" fill="none" stroke="#252b24" stroke-width="8" /><circle cx="41" cy="23" r="5.500" fill="#252b24" /><path d="M34 37H43V61M32 61H52" fill="none" stroke="#252b24" stroke-width="6" stroke-linecap="round" stroke-linejoin="round" /></svg></button>
        <button class="download">
          <svg width="54" height="60" viewBox="0 0 54 60"><path d="M27 1.500L52.500 15V45L27 58.500L1.500 45V15z" fill="#fff" stroke="#4562ff" stroke-width="2" stroke-linejoin="round" /><path d="M27 7L47.500 18V42L27 53L6.500 42V18z" fill="#4562ff" stroke="#4562ff" stroke-linejoin="round" /><path d="M27 21V39M18 30H36" stroke="#fff" stroke-width="5" /></svg>
          Download map
        </button>
      </section>
      <section class="sheet">
        <div class="grip"></div>
        <dl class="stats">
          <div><dt>Length</dt><dd>12.7 mi</dd></div>
          <div><dt>Elevation gain</dt><dd>1,469.8 ft</dd></div>
          <div><dt>Moving time</dt><dd>02:05:00</dd></div>
        </dl>
        <elevation-chart></elevation-chart>
        <button class="start">Start</button>
        <div class="home"></div>
      </section>`;
  }
}
